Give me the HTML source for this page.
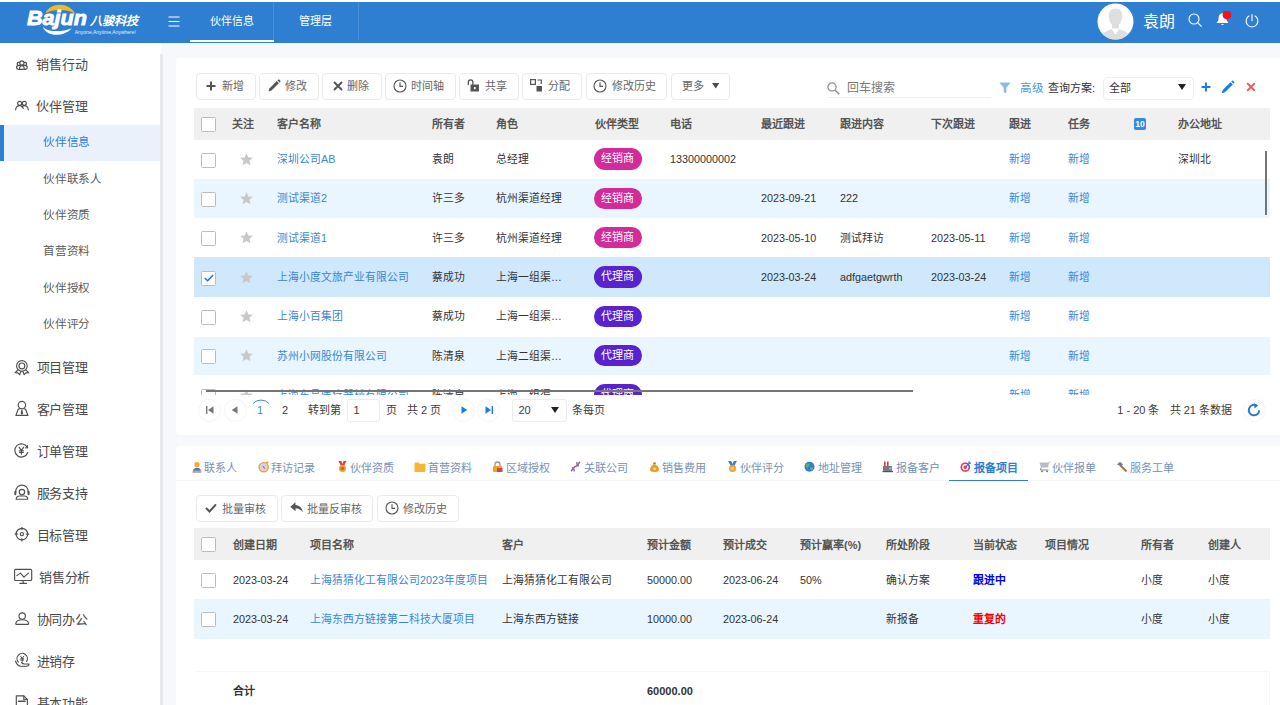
<!DOCTYPE html>
<html lang="zh-CN">
<head>
<meta charset="utf-8">
<title>伙伴信息</title>
<style>
*{box-sizing:border-box;margin:0;padding:0}
html,body{width:1280px;height:705px;overflow:hidden;background:#fff}
body{font-family:"Liberation Sans",sans-serif;color:#333;position:relative;font-size:11px}
.abs{position:absolute}
#hdr{position:absolute;left:0;top:2px;width:1280px;height:41px;background:#2e7ed1}
#hdr .t{position:absolute;top:0;height:41px;line-height:39px;color:#fff;font-size:11px;white-space:nowrap}
#side{position:absolute;left:0;top:43px;width:161px;height:662px;background:#fff}
#main{position:absolute;left:161px;top:43px;width:1119px;height:662px;background:#f6f8fc}
.m1{position:absolute;left:37px;font-size:13px;letter-spacing:-0.1px;color:#4a4a4a;height:20px;line-height:20px;white-space:nowrap}
.m2{position:absolute;left:43.4px;font-size:11.6px;letter-spacing:-0.4px;color:#5c5c5c;height:20px;line-height:20px;white-space:nowrap}
.ic{position:absolute;left:14px}
.panel{position:absolute;background:#fff;border-radius:4px 0 0 4px}
.btn{position:absolute;height:27px;border:1px solid #ebebeb;border-radius:4px;background:#fff;font-size:11px;color:#666;white-space:nowrap}
.btn span{position:absolute;top:0.8px;line-height:25px}
.btn svg{position:absolute;margin-top:-1px}
.th{position:absolute;background:#f0f0f0}
.th b{position:absolute;top:0.8px;font-size:11px;color:#555;font-weight:bold;white-space:nowrap}
.row{position:absolute;left:194px;width:1076px;overflow:hidden}
.row span,.row a{position:absolute;top:0.5px;font-size:10.8px;white-space:nowrap;color:#333}
.row a{color:#3a86d4}
.cb{position:absolute;width:15px;height:15px;border:1px solid #bcbcbc;border-radius:1.5px;background:#fff}
.row .bdg{left:399px;width:48px;height:21.4px;line-height:21.4px!important;border-radius:11px;color:#fff;font-size:11px;text-align:center}
.star{position:absolute;left:45px;width:13px;height:13px}
.tab{position:absolute;top:460.8px;font-size:11px;color:#7691b5;height:14px;line-height:14px;white-space:nowrap}
.pg{position:absolute;font-size:11px;color:#3c3c3c;white-space:nowrap;line-height:22px;top:399px;height:22px}
</style>
</head>
<body>
<div id="hdr">
<svg class="abs" style="left:20px;top:-2px" width="130" height="45" viewBox="20 0 130 45">
<path d="M45.500 13.200C49 3.500 68.500 0.500 75.200 13.900C68.500 8.600 53 9 45.500 13.200Z" fill="#f5b81f"/>
<path d="M42.600 26.400C46 31.500 60 33 72 28.200C63 37.500 46.500 37 42.600 26.400Z" fill="#fff"/>
<text x="27" y="25.400" font-family="Liberation Sans, sans-serif" font-size="21" font-weight="bold" font-style="italic" fill="#fff" stroke="#fff" stroke-width="0.9" textLength="60" lengthAdjust="spacingAndGlyphs">Bajun</text>
<text x="89.500" y="24.600" font-family="Liberation Sans, sans-serif" font-size="12" font-weight="bold" font-style="italic" fill="#fff" textLength="49" lengthAdjust="spacingAndGlyphs">八骏科技</text>
<text x="74.800" y="33.800" font-family="Liberation Sans, sans-serif" font-size="5" fill="#e8f0fb" textLength="61" lengthAdjust="spacingAndGlyphs">Anyone,Anytime,Anywhere!</text>
</svg>
<svg class="abs" style="left:168px;top:14px" width="12" height="11" viewBox="0 0 12 11"><path d="M0.5 1h11M0.5 5.5h11M0.5 10h11" stroke="#fff" stroke-width="1.15" fill="none"/></svg>
<div class="t" style="left:210px">伙伴信息</div>
<div class="abs" style="left:190px;top:38px;width:83.5px;height:2px;background:#fff"></div>
<div class="abs" style="left:273px;top:0;width:1px;height:38px;background:#4a90d9"></div>
<div class="t" style="left:299px">管理层</div>
<div class="abs" style="left:358px;top:0;width:1px;height:38px;background:#4a90d9"></div>
<svg class="abs" style="left:1097px;top:0.5px" width="37" height="37" viewBox="0 0 37 37">
<defs><clipPath id="av"><circle cx="18.5" cy="18.5" r="18"/></clipPath></defs>
<circle cx="18.5" cy="18.5" r="18" fill="#fff"/>
<g clip-path="url(#av)" fill="#dedede">
<path d="M18.500 5.500c4.200 0 6.800 3 6.800 7.500 0 3.500-1.500 6.500-3.300 8.500v4h-7v-4c-1.800-2-3.300-5-3.300-8.500 0-4.500 2.600-7.500 6.800-7.500z"/>
<path d="M3 37C4 30 9 28.500 14.500 26L18.500 31.500 22.500 26C28 28.500 33 30 34 37Z"/>
</g></svg>
<div class="t" style="left:1142.600px;font-size:16px;letter-spacing:0.3px;line-height:39.600px">袁朗</div>
<svg class="abs" style="left:1188px;top:11px" width="15" height="15" viewBox="0 0 15 15"><circle cx="6" cy="6" r="5" stroke="#fff" stroke-width="1.1" fill="none"/><path d="M9.6 9.6L13.6 13.6" stroke="#fff" stroke-width="1.1"/></svg>
<svg class="abs" style="left:1216px;top:9px" width="16" height="17" viewBox="0 0 16 17"><path d="M6.3 2.2c-2.4.3-3.7 2.2-3.7 4.5 0 3-1.1 3.9-1.8 4.7v.7h11.4v-.7c-.7-.8-1.800-1.700-1.800-4.700 0-2.300-1.300-4.200-3.700-4.500z" fill="#fff"/><path d="M5.100 13a1.500 1.500 0 0 0 2.800 0z" fill="#fff"/><circle cx="10.9" cy="3.800" r="4.400" fill="#f5101e"/></svg>
<svg class="abs" style="left:1245px;top:11.500px" width="14" height="14" viewBox="0 0 14 14"><path d="M4.300 1.800A5.900 5.900 0 1 0 9.700 1.800" stroke="#fff" stroke-width="1.100" fill="none"/><path d="M7 0.300V7" stroke="#fff" stroke-width="1.100"/></svg>
</div>
<div id="side">
<div class="abs" style="left:0;top:81.500px;width:161px;height:36px;background:#eaf1fb"></div>
<div class="abs" style="left:0;top:81.500px;width:4px;height:36px;background:#2e7ed1"></div>
<svg class="ic" style="left:12px;top:12px" width="20" height="20" viewBox="0 0 20 20"><g stroke="#4f4f4f" stroke-width="1.15" fill="none" stroke-linecap="round" stroke-linejoin="round"><circle cx="9.9" cy="7.9" r="2.1"/><path d="M7.500 7.500a1.500 1.500 0 1 0-1.500 2.700M12.300 7.500a1.500 1.500 0 1 1 1.500 2.700"/><path d="M4.500 12.600c0-1.500 1.100-2.200 2.500-2.200h5.800c1.400 0 2.500.7 2.500 2.200 0 1.100-.8 1.700-2 1.700h-6.800c-1.200 0-2-.6-2-1.700z"/><path d="M7.500 14.200c0-2.200 1-3.500 2.400-3.500s2.400 1.300 2.400 3.500"/></g></svg>
<div class="m1" style="top:12px;left:36.2px">销售行动</div>
<svg class="ic" style="left:12px;top:54px" width="20" height="20" viewBox="0 0 20 20"><g stroke="#4f4f4f" stroke-width="1.15" fill="none" stroke-linecap="round" stroke-linejoin="round"><circle cx="7.700" cy="6.300" r="2"/><circle cx="12.300" cy="6.300" r="2"/><path d="M3.600 12.800c.3-2.700 1.900-4.200 4.100-4.200 1.800 0 3 1.100 3.600 2.800M9.900 9.900c.7-.8 1.500-1.300 2.500-1.300 2.200 0 3.600 1.500 3.900 4.200"/></g></svg>
<div class="m1" style="top:54px;left:36.2px">伙伴管理</div>
<svg class="ic" style="left:12px;top:314px" width="20" height="20" viewBox="0 0 20 20"><g stroke="#4f4f4f" stroke-width="1.15" fill="none" stroke-linecap="round" stroke-linejoin="round"><circle cx="9.900" cy="8.900" r="5.300"/><circle cx="9.900" cy="8.900" r="2.900"/><path d="M6 13L3.100 15.600l2.800.3 1.700 1.800L9 14.300M13.800 13l2.900 2.600-2.800.3-1.700 1.800-1.400-3.400"/></g></svg>
<div class="m1" style="top:314.8px;left:36.6px">项目管理</div>
<svg class="ic" style="left:12px;top:356px" width="20" height="20" viewBox="0 0 20 20"><g stroke="#4f4f4f" stroke-width="1.15" fill="none" stroke-linecap="round" stroke-linejoin="round"><circle cx="9.900" cy="6.100" r="3.700"/><path d="M7.800 9.600C7 9.600 6.300 10 6 10.800L3.900 16.400H15.900L13.800 10.800C13.500 10 12.800 9.600 12 9.600"/><path d="M9.900 10.800v.8l-.6 2.600.6.900.6-.9-.6-2.600" fill="#4f4f4f"/></g></svg>
<div class="m1" style="top:356.8px;left:36.6px">客户管理</div>
<svg class="ic" style="left:12px;top:398px" width="20" height="20" viewBox="0 0 20 20"><g stroke="#4f4f4f" stroke-width="1.15" fill="none" stroke-linecap="round" stroke-linejoin="round"><path d="M15.400 6.600A6.600 6.600 0 1 0 15.700 11.500"/><path d="M13.600 6.900l2-.2-.2-2"/><path d="M7.200 6.300l2.200 3 2.200-3M9.400 9.300v3.900M7.400 9.700h4M7.400 11.300h4"/></g></svg>
<div class="m1" style="top:398.8px;left:36.6px">订单管理</div>
<svg class="ic" style="left:12px;top:440px" width="20" height="20" viewBox="0 0 20 20"><g stroke="#4f4f4f" stroke-width="1.15" fill="none" stroke-linecap="round" stroke-linejoin="round"><path d="M3.800 9.800V8.300a6.150 6.150 0 0 1 12.300 0v1.500"/><path d="M3.300 8.600v2.600M16.600 8.600v2.600" stroke-width="1.900"/><circle cx="9.950" cy="9.100" r="2.700"/><path d="M4.200 16.200c0-2.200 1.500-3.200 3.500-3.200h4.500c2 0 3.500 1 3.500 3.200z"/></g></svg>
<div class="m1" style="top:440.8px;left:36.6px">服务支持</div>
<svg class="ic" style="left:12px;top:482px" width="20" height="20" viewBox="0 0 20 20"><g stroke="#4f4f4f" stroke-width="1.15" fill="none" stroke-linecap="round" stroke-linejoin="round"><circle cx="9.900" cy="9.100" r="5.800"/><circle cx="9.900" cy="9.100" r="1.600"/><path d="M9.900 2.300v2.300M9.900 13.600v2.300M3.100 9.100h2.300M14.400 9.100h2.300"/></g></svg>
<div class="m1" style="top:482.8px;left:36.6px">目标管理</div>
<svg class="ic" style="left:12px;top:524px" width="22" height="20" viewBox="0 0 22 20"><g stroke="#4f4f4f" stroke-width="1.15" fill="none" stroke-linecap="round" stroke-linejoin="round"><rect x="2.600" y="2.300" width="17.100" height="11.200" rx="1"/><path d="M4.900 8.600l3.500-2.500 3.500 4 4.500-4M11.150 13.600v2.600M7.900 16.400h6.500"/></g></svg>
<div class="m1" style="top:524.8px;left:38.8px">销售分析</div>
<svg class="ic" style="left:12px;top:566px" width="20" height="20" viewBox="0 0 20 20"><g stroke="#4f4f4f" stroke-width="1.15" fill="none" stroke-linecap="round" stroke-linejoin="round"><circle cx="10.200" cy="7" r="3.200"/><path d="M4.300 15.300c-.5 0-.6-.4-.5-.9.500-2.400 2.500-3.700 6.400-3.700s5.900 1.300 6.400 3.700c.1.500 0 .9-.5.9z"/></g></svg>
<div class="m1" style="top:566.8px;left:36.6px">协同办公</div>
<svg class="ic" style="left:12px;top:608px" width="20" height="20" viewBox="0 0 20 20"><g stroke="#4f4f4f" stroke-width="1.15" fill="none" stroke-linecap="round" stroke-linejoin="round"><path d="M6.300 11.100A5.200 5.200 0 1 1 14.600 10.400"/><path d="M8.600 5.200l1.600 2.200 1.600-2.200M10.200 7.400v3M8.700 7.800h3M8.700 9.100h3" stroke-width="1"/><path d="M3.500 10.200c1 2.500 2.600 5 5.200 5h5.800c1.500 0 2.400-1 2.500-2.200h-4.500c-1.200 0-2.200-.6-3-1.500"/></g></svg>
<div class="m1" style="top:608.8px;left:36.6px">进销存</div>
<svg class="ic" style="left:12px;top:650px" width="20" height="20" viewBox="0 0 20 20"><g stroke="#4f4f4f" stroke-width="1.15" fill="none" stroke-linecap="round" stroke-linejoin="round"><path d="M4.300 2.900h7.500l3.600 3.600v12H4.300z"/><path d="M11.800 2.900v3.600h3.600"/><path d="M6.600 8.200h6.400" stroke-width="1.600"/></g></svg>
<div class="m1" style="top:650.8px;left:36.6px">基本功能</div>
<div class="m2" style="top:88.5px;color:#2e7ed1">伙伴信息</div>
<div class="m2" style="top:125.5px">伙伴联系人</div>
<div class="m2" style="top:161.5px">伙伴资质</div>
<div class="m2" style="top:197.5px">首营资料</div>
<div class="m2" style="top:234.5px">伙伴授权</div>
<div class="m2" style="top:270.5px">伙伴评分</div>
</div>
<div id="main"></div>
<div class="abs" style="left:160px;top:54px;width:2.700px;height:651px;background:#e7e8eb"></div>
<div class="panel" style="left:176px;top:57.500px;width:1110px;height:377.500px"></div>
<div class="panel" style="left:176px;top:445.500px;width:1110px;height:270px"></div>
<div class="btn" style="left:196px;top:72.5px;width:59.5px"><svg style="left:9px;top:8px" width="10" height="10" viewBox="0 0 10 10"><path d="M5 0.500v9M0.500 5h9" stroke="#555" stroke-width="2"/></svg><span style="left:25px">新增</span></div>
<div class="btn" style="left:259px;top:72.5px;width:59.5px"><svg style="left:8px;top:6px" width="13" height="13" viewBox="0 0 13 13"><path d="M0.500 12.500l.9-3 7.400-7.400 2.100 2.100-7.400 7.400z" fill="#555"/><path d="M9.500 1.400l.6-.6c.4-.4 1-.4 1.400 0l.7.700c.4.400.4 1 0 1.400l-.6.600z" fill="#555"/></svg><span style="left:24.7px">修改</span></div>
<div class="btn" style="left:322px;top:72.5px;width:59.5px"><svg style="left:10px;top:8px" width="10" height="10" viewBox="0 0 10 10"><path d="M1 1l8 8M9 1l-8 8" stroke="#555" stroke-width="2"/></svg><span style="left:24.3px">删除</span></div>
<div class="btn" style="left:385px;top:72.5px;width:70.5px"><svg style="left:7.200px;top:6px" width="14" height="14" viewBox="0 0 14 14"><circle cx="7" cy="7" r="6" stroke="#555" stroke-width="1.100" fill="none"/><path d="M7 3.300V7.400H10" stroke="#555" stroke-width="1.100" fill="none"/></svg><span style="left:25px">时间轴</span></div>
<div class="btn" style="left:459px;top:72.5px;width:59.5px"><svg style="left:7px;top:6px" width="13" height="13" viewBox="0 0 13 13"><path d="M1.300 6V3.200a2.300 2.300 0 0 1 4.600 0V6" stroke="#555" stroke-width="1.300" fill="none"/><rect x="3.500" y="5.500" width="8.500" height="7" fill="#555"/><rect x="7" y="8" width="1.600" height="2.200" fill="#fff"/></svg><span style="left:24.7px">共享</span></div>
<div class="btn" style="left:522px;top:72.5px;width:59.5px"><svg style="left:7.300px;top:6px" width="13" height="13" viewBox="0 0 13 13"><rect x="0.600" y="0.600" width="4.800" height="4.800" stroke="#555" stroke-width="1.200" fill="none"/><rect x="6.500" y="7" width="5.500" height="5.500" fill="#555"/><path d="M7.500 1h3.800v4" stroke="#555" stroke-width="1.200" fill="none"/></svg><span style="left:24.8px">分配</span></div>
<div class="btn" style="left:585.5px;top:72.5px;width:81px"><svg style="left:6.500px;top:6px" width="14" height="14" viewBox="0 0 14 14"><circle cx="7" cy="7" r="6" stroke="#555" stroke-width="1.100" fill="none"/><path d="M7 3.300V7.400H10" stroke="#555" stroke-width="1.100" fill="none"/></svg><span style="left:25px">修改历史</span></div>
<div class="btn" style="left:670.5px;top:72.5px;width:59.5px"><svg style="left:40px;top:10.800px" width="7.500" height="5.500" viewBox="0 0 8 6"><path d="M0 0h8L4 6z" fill="#4a4a4a"/></svg><span style="left:10.5px">更多</span></div>
<svg class="abs" style="left:827px;top:81.500px" width="13" height="13" viewBox="0 0 13 13"><circle cx="5" cy="5" r="4.100" stroke="#8a8a8a" stroke-width="1.200" fill="none"/><path d="M8 8l4.300 4.300" stroke="#8a8a8a" stroke-width="1.400"/></svg>
<div class="abs" style="left:846.500px;top:78.800px;font-size:12px;letter-spacing:0.25px;line-height:18px;color:#777;white-space:nowrap">回车搜索</div>
<div class="abs" style="left:827px;top:96.500px;width:164px;height:1px;background:#eef1f7"></div>
<svg class="abs" style="left:999px;top:82px" width="12" height="12" viewBox="0 0 12 12"><path d="M0.300 0.500h11.400L7.300 5.800V11.500L4.700 10V5.800z" fill="#8bbbe6"/></svg>
<div class="abs" style="left:1020px;top:79.600px;font-size:11.500px;letter-spacing:0.5px;line-height:17px;color:#4d97e0;white-space:nowrap">高级</div>
<div class="abs" style="left:1047.500px;top:79.600px;font-size:11px;letter-spacing:0.1px;line-height:17px;color:#333;white-space:nowrap">查询方案:</div>
<div class="abs" style="left:1103px;top:76.500px;width:90.500px;height:23px;border:1px solid #eeeeee;border-radius:4px"></div>
<div class="abs" style="left:1109px;top:80px;font-size:11px;line-height:17px;color:#333">全部</div>
<svg class="abs" style="left:1178px;top:84px" width="8" height="6" viewBox="0 0 8 6"><path d="M0 0h8L4 6z" fill="#222"/></svg>
<svg class="abs" style="left:1200.600px;top:82.200px" width="10" height="10" viewBox="0 0 10 10"><path d="M5 0.600v8.800M0.600 5h8.800" stroke="#1a7be0" stroke-width="1.900"/></svg>
<svg class="abs" style="left:1221.200px;top:80.200px" width="14" height="14" viewBox="0 0 14 14"><path d="M0.800 13.200l.9-3.100 7.900-7.900 2.200 2.200-7.900 7.900z" fill="#1a7be0"/><path d="M10.300 1.500l.6-.6c.4-.4 1-.4 1.400 0l.8.800c.4.400.4 1 0 1.400l-.6.600z" fill="#1a7be0"/></svg>
<svg class="abs" style="left:1246.300px;top:82.400px" width="10" height="10" viewBox="0 0 10 10"><path d="M1.200 1.200l7.600 7.600M8.800 1.200l-7.600 7.600" stroke="#f3504e" stroke-width="1.900"/></svg>
<div class="th" style="left:194px;top:107.500px;width:1076px;height:32px;line-height:32px"><div class="abs" style="left:0.500px;top:0;width:100%;height:32px">
<div class="cb" style="left:6.500px;top:9px"></div>
<b style="left:37.5px">关注</b>
<b style="left:82.5px">客户名称</b>
<b style="left:237.5px">所有者</b>
<b style="left:301.5px">角色</b>
<b style="left:400.5px">伙伴类型</b>
<b style="left:475.5px">电话</b>
<b style="left:566.5px">最近跟进</b>
<b style="left:645.5px">跟进内容</b>
<b style="left:736.5px">下次跟进</b>
<b style="left:814.5px">跟进</b>
<b style="left:873.5px">任务</b>
<b style="left:983.5px">办公地址</b>
<svg class="abs" style="left:939.500px;top:10.500px" width="12" height="12" viewBox="0 0 12 12"><rect width="12" height="12" rx="1.800" fill="#2f8be6"/><text x="6" y="9.200" font-size="8.500" font-weight="bold" font-family="Liberation Sans, sans-serif" fill="#fff" text-anchor="middle" textLength="9.500" lengthAdjust="spacingAndGlyphs">10</text></svg>
</div></div>
<div class="row" style="top:140.00px;height:39.00px;background:#fff;line-height:39.333px"><div class="abs" style="left:0.500px;top:-0.50px;width:100%;height:39.333px">
<div class="cb" style="left:6.500px;top:13px"></div>
<svg class="star" style="top:13px" viewBox="0 0 13 13"><path d="M6.500 0.300l1.850 4.150 4.450.4-3.350 2.950 1 4.400L6.500 9.900l-3.950 2.300 1-4.400L0.200 4.850l4.450-.4z" fill="#c8c8c8"/></svg>
<a style="left:82.5px">深圳公司AB</a>
<span style="left:237.5px">袁朗</span>
<span style="left:301.5px">总经理</span>
<span class="bdg" style="top:8.700px;background:#d42b9b">经销商</span>
<span style="left:475.5px">13300000002</span>
<a style="left:814.5px">新增</a>
<a style="left:873.5px">新增</a>
<span style="left:983.5px">深圳北</span>
</div></div>
<div class="row" style="top:179.00px;height:39.00px;background:#e9f5ff;line-height:39.333px"><div class="abs" style="left:0.500px;top:-0.17px;width:100%;height:39.333px">
<div class="cb" style="left:6.500px;top:13px"></div>
<svg class="star" style="top:13px" viewBox="0 0 13 13"><path d="M6.500 0.300l1.850 4.150 4.450.4-3.350 2.950 1 4.400L6.500 9.900l-3.950 2.300 1-4.400L0.200 4.850l4.450-.4z" fill="#c8c8c8"/></svg>
<a style="left:82.5px">测试渠道2</a>
<span style="left:237.5px">许三多</span>
<span style="left:301.5px">杭州渠道经理</span>
<span class="bdg" style="top:8.700px;background:#d42b9b">经销商</span>
<span style="left:566.5px">2023-09-21</span>
<span style="left:645.5px">222</span>
<a style="left:814.5px">新增</a>
<a style="left:873.5px">新增</a>
</div></div>
<div class="row" style="top:218.00px;height:39.00px;background:#fff;line-height:39.333px"><div class="abs" style="left:0.500px;top:0.17px;width:100%;height:39.333px">
<div class="cb" style="left:6.500px;top:13px"></div>
<svg class="star" style="top:13px" viewBox="0 0 13 13"><path d="M6.500 0.300l1.850 4.150 4.450.4-3.350 2.950 1 4.400L6.500 9.900l-3.950 2.300 1-4.400L0.200 4.850l4.450-.4z" fill="#c8c8c8"/></svg>
<a style="left:82.5px">测试渠道1</a>
<span style="left:237.5px">许三多</span>
<span style="left:301.5px">杭州渠道经理</span>
<span class="bdg" style="top:8.700px;background:#d42b9b">经销商</span>
<span style="left:566.5px">2023-05-10</span>
<span style="left:645.5px">测试拜访</span>
<span style="left:736.5px">2023-05-11</span>
<a style="left:814.5px">新增</a>
<a style="left:873.5px">新增</a>
</div></div>
<div class="row" style="top:257.00px;height:40.00px;background:#cfe8fc;line-height:39.333px"><div class="abs" style="left:0.500px;top:0.50px;width:100%;height:39.333px">
<div class="cb" style="left:6.500px;top:13px"><svg style="position:absolute;left:1.500px;top:2.500px" width="10" height="8" viewBox="0 0 10 8"><path d="M0.800 4l2.800 2.800L9.200 1" stroke="#1a73d8" stroke-width="1.500" fill="none"/></svg></div>
<svg class="star" style="top:13px" viewBox="0 0 13 13"><path d="M6.500 0.300l1.850 4.150 4.450.4-3.350 2.950 1 4.400L6.500 9.900l-3.950 2.300 1-4.400L0.200 4.850l4.450-.4z" fill="#c8c8c8"/></svg>
<a style="left:82.5px">上海小度文旅产业有限公司</a>
<span style="left:237.5px">蔡成功</span>
<span style="left:301.5px">上海一组渠…</span>
<span class="bdg" style="top:8.700px;background:#5a22cf">代理商</span>
<span style="left:566.5px">2023-03-24</span>
<span style="left:645.5px">adfgaetgwrth</span>
<span style="left:736.5px">2023-03-24</span>
<a style="left:814.5px">新增</a>
<a style="left:873.5px">新增</a>
</div></div>
<div class="row" style="top:297.00px;height:40.00px;background:#fff;line-height:39.333px"><div class="abs" style="left:0.500px;top:-0.17px;width:100%;height:39.333px">
<div class="cb" style="left:6.500px;top:13px"></div>
<svg class="star" style="top:13px" viewBox="0 0 13 13"><path d="M6.500 0.300l1.850 4.150 4.450.4-3.350 2.950 1 4.400L6.500 9.900l-3.950 2.300 1-4.400L0.200 4.850l4.450-.4z" fill="#c8c8c8"/></svg>
<a style="left:82.5px">上海小百集团</a>
<span style="left:237.5px">蔡成功</span>
<span style="left:301.5px">上海一组渠…</span>
<span class="bdg" style="top:8.700px;background:#5a22cf">代理商</span>
<a style="left:814.5px">新增</a>
<a style="left:873.5px">新增</a>
</div></div>
<div class="row" style="top:337.00px;height:38.00px;background:#e9f5ff;line-height:39.333px"><div class="abs" style="left:0.500px;top:-0.84px;width:100%;height:39.333px">
<div class="cb" style="left:6.500px;top:13px"></div>
<svg class="star" style="top:13px" viewBox="0 0 13 13"><path d="M6.500 0.300l1.850 4.150 4.450.4-3.350 2.950 1 4.400L6.500 9.900l-3.950 2.300 1-4.400L0.200 4.850l4.450-.4z" fill="#c8c8c8"/></svg>
<a style="left:82.5px">苏州小网股份有限公司</a>
<span style="left:237.5px">陈清泉</span>
<span style="left:301.5px">上海二组渠…</span>
<span class="bdg" style="top:8.700px;background:#5a22cf">代理商</span>
<a style="left:814.5px">新增</a>
<a style="left:873.5px">新增</a>
</div></div>
<div class="row" style="top:375.00px;height:19.50px;background:#fff;line-height:39.333px"><div class="abs" style="left:0.500px;top:0.50px;width:100%;height:39.333px">
<div class="cb" style="left:6.500px;top:13px"></div>
<svg class="star" style="top:13px" viewBox="0 0 13 13"><path d="M6.500 0.300l1.850 4.150 4.450.4-3.350 2.950 1 4.400L6.500 9.900l-3.950 2.300 1-4.400L0.200 4.850l4.450-.4z" fill="#c8c8c8"/></svg>
<a style="left:82.5px">上海东昌医疗器械有限公司</a>
<span style="left:237.5px">陈清泉</span>
<span style="left:301.5px">上海二组渠…</span>
<span class="bdg" style="top:8.700px;background:#5a22cf">代理商</span>
<a style="left:814.5px">新增</a>
<a style="left:873.5px">新增</a>
</div></div>
<div class="abs" style="left:1265px;top:150.500px;width:2px;height:64.500px;background:#757575"></div>
<div class="abs" style="left:205.500px;top:390.200px;width:707.500px;height:2px;background:#757575"></div>
<div class="abs" style="left:198.0px;top:398.500px;width:23px;height:23px;border:1px solid #f2f5f9;border-radius:50%"></div>
<div class="abs" style="left:223.5px;top:398.500px;width:23px;height:23px;border:1px solid #f2f5f9;border-radius:50%"></div>
<div class="abs" style="left:452.0px;top:398.500px;width:23px;height:23px;border:1px solid #f2f5f9;border-radius:50%"></div>
<div class="abs" style="left:477.0px;top:398.500px;width:23px;height:23px;border:1px solid #f2f5f9;border-radius:50%"></div>
<svg class="abs" style="left:205.500px;top:406px" width="8" height="8" viewBox="0 0 8 8"><path d="M0.700 0v8" stroke="#777" stroke-width="1.400"/><path d="M7.500 0.300v7.400L2 4z" fill="#777"/></svg>
<svg class="abs" style="left:231px;top:406px" width="7" height="8" viewBox="0 0 7 8"><path d="M6.500 0.300v7.400L0.800 4z" fill="#777"/></svg>
<svg class="abs" style="left:250px;top:398px" width="22" height="8" viewBox="0 0 22 8"><path d="M3 5.500A11 11 0 0 1 19 5.500" stroke="#3b8ad9" stroke-width="1" fill="none"/></svg>
<div class="pg" style="left:257px;color:#3b8ad9">1</div>
<div class="pg" style="left:282px">2</div>
<div class="pg" style="left:308px">转到第</div>
<div class="abs" style="left:347px;top:399px;width:32.500px;height:22.500px;border:1px solid #ececec;border-radius:3px"></div>
<div class="pg" style="left:353.500px">1</div>
<div class="pg" style="left:386px">页</div>
<div class="pg" style="left:407px">共 2 页</div>
<svg class="abs" style="left:460.500px;top:406px" width="7" height="8" viewBox="0 0 7 8"><path d="M0.500 0.300v7.400L6.200 4z" fill="#1a7be0"/></svg>
<svg class="abs" style="left:484.500px;top:406px" width="8" height="8" viewBox="0 0 8 8"><path d="M7.300 0v8" stroke="#1a7be0" stroke-width="1.400"/><path d="M0.500 0.300v7.400L6 4z" fill="#1a7be0"/></svg>
<div class="abs" style="left:512px;top:399px;width:54.500px;height:22.500px;border:1px solid #ececec;border-radius:3px"></div>
<div class="pg" style="left:518.500px">20</div>
<svg class="abs" style="left:551px;top:407px" width="8" height="6" viewBox="0 0 8 6"><path d="M0 0h8L4 6z" fill="#222"/></svg>
<div class="pg" style="left:572.300px">条每页</div>
<div class="pg" style="left:1117.300px">1 - 20 条</div>
<div class="pg" style="left:1169.700px">共 21 条数据</div>
<div class="abs" style="left:1242.800px;top:398.500px;width:23px;height:23px;border:1px solid #f3f5f8;border-radius:50%"></div>
<svg class="abs" style="left:1247.300px;top:403px" width="14" height="14" viewBox="0 0 14 14"><path d="M9.600 2.600A5.200 5.200 0 1 0 12.200 7.200" stroke="#1f7bcf" stroke-width="1.900" fill="none"/><path d="M6.800 0l4.400 2.400-3.600 3z" fill="#1f7bcf"/></svg>
<svg class="abs" style="left:191px;top:461px" width="11.500" height="11.500" viewBox="0 0 11.500 11.500"><circle cx="6" cy="3.600" r="2.700" fill="#f3a936"/><path d="M1.600 11.500c0-3.200 1.800-4.800 4.400-4.800s4.400 1.600 4.400 4.800z" fill="#3b7bd6"/><rect x="1.800" y="9.600" width="8.400" height="1.700" rx="0.800" fill="#f0a030"/></svg>
<div class="tab" style="left:204px">联系人</div>
<svg class="abs" style="left:258.2px;top:461px" width="11.500" height="11.500" viewBox="0 0 11.500 11.500"><path d="M7.500 1.500l2-1.200 1 1.500-2 1z" fill="#e09030"/><circle cx="5.700" cy="6.200" r="5.300" fill="#eea23a"/><circle cx="5.700" cy="6.200" r="3.900" fill="#d3d6e0"/><path d="M4.200 4.600l1.900 1 1.400 2.600-1.900-1z" fill="#d8557a"/></svg>
<div class="tab" style="left:271px">拜访记录</div>
<svg class="abs" style="left:337px;top:461px" width="11.500" height="11.500" viewBox="0 0 11.500 11.500"><path d="M1.500 0h3l1 3 1-3h3L7 5H4z" fill="#d9453a"/><circle cx="5.500" cy="7.500" r="3.500" fill="#f0a030"/><circle cx="5.500" cy="7.500" r="1.800" fill="#c86a18"/></svg>
<div class="tab" style="left:350px">伙伴资质</div>
<svg class="abs" style="left:414px;top:461px" width="11.500" height="11.500" viewBox="0 0 11.500 11.500"><path d="M0.500 2.500c0-.6.400-1 1-1h3l1.200 1.300h4.800c.6 0 1 .4 1 1V10c0 .6-.4 1-1 1h-9c-.6 0-1-.4-1-1z" fill="#f7b531"/></svg>
<div class="tab" style="left:428px">首营资料</div>
<svg class="abs" style="left:492px;top:461px" width="11.500" height="11.500" viewBox="0 0 11.500 11.500"><path d="M3 5V3.500a2.500 2.500 0 0 1 5 0V5" stroke="#999" stroke-width="1.300" fill="none"/><rect x="1" y="5" width="9" height="6" rx="1" fill="#f0a030"/><rect x="5" y="7" width="5.500" height="4" fill="#d9453a"/></svg>
<div class="tab" style="left:506px">区域授权</div>
<svg class="abs" style="left:570px;top:461px" width="11.500" height="11.500" viewBox="0 0 11.500 11.500"><path d="M1 10C3 9 3 6 5.500 5.500S8 2 10 1" stroke="#d9456a" stroke-width="1.600" fill="none"/><path d="M2 6.500C4 7 4.500 9 4 10.500M7 1c-.5 1.500 0 3.500 2 4" stroke="#4a8ae0" stroke-width="1.400" fill="none"/></svg>
<div class="tab" style="left:584px">关联公司</div>
<svg class="abs" style="left:649px;top:461px" width="11.500" height="11.500" viewBox="0 0 11.500 11.500"><path d="M4 1.500h3l-.5 2h-2z" fill="#c8771c"/><path d="M4.500 3.500h2C9 5 10 7 10 8.800 10 10.500 8.500 11 5.500 11S1 10.500 1 8.800C1 7 2 5 4.500 3.500z" fill="#e59a2c"/><circle cx="5.500" cy="7.800" r="1.500" fill="#f6d67a"/></svg>
<div class="tab" style="left:662px">销售费用</div>
<svg class="abs" style="left:727px;top:461px" width="11.500" height="11.500" viewBox="0 0 11.500 11.500"><path d="M1 0h3.200l1.300 3 1.300-3H10L7.200 5H3.800z" fill="#3f7fd8"/><circle cx="5.500" cy="7.500" r="3.500" fill="#f0a030"/><circle cx="5.500" cy="7.500" r="1.800" fill="#f6c85a"/></svg>
<div class="tab" style="left:740px">伙伴评分</div>
<svg class="abs" style="left:804px;top:461px" width="11.500" height="11.500" viewBox="0 0 11.500 11.500"><circle cx="5.500" cy="5.800" r="5" fill="#2f7de0"/><path d="M2 3.500c1.500-1.500 3-1.500 3.500 0S4 5.500 3.500 7 2 6 2 3.500zM6.500 6.500c1-.5 2.500 0 2.500 1.300S7.500 10 6.800 9s-1-2-.3-2.500z" fill="#5cb85c"/></svg>
<div class="tab" style="left:818px">地址管理</div>
<svg class="abs" style="left:882px;top:461px" width="11.500" height="11.500" viewBox="0 0 11.500 11.500"><rect x="1" y="5" width="9" height="5" fill="#7a7a86"/><rect x="2" y="0.500" width="1.600" height="5" fill="#c44"/><rect x="5" y="0.500" width="1.600" height="5" fill="#c44"/><rect x="0.500" y="10" width="10.500" height="1.200" fill="#555"/><rect x="7" y="6.500" width="2.500" height="2" fill="#8ab8e8"/></svg>
<div class="tab" style="left:896px">报备客户</div>
<svg class="abs" style="left:960px;top:461px" width="11.500" height="11.500" viewBox="0 0 11.500 11.500"><circle cx="5.300" cy="6.200" r="4.800" fill="#e0355a"/><circle cx="5.300" cy="6.200" r="3.100" fill="#fff"/><circle cx="5.300" cy="6.200" r="1.700" fill="#e0355a"/><path d="M5.300 6.200L10 1.500" stroke="#4a7ad0" stroke-width="1.300"/><path d="M8.500 0.500l2.200 2.200" stroke="#4a7ad0" stroke-width="1.300"/></svg>
<div class="tab" style="left:974px;color:#2e7ed1;font-weight:bold">报备项目</div>
<svg class="abs" style="left:1039px;top:461px" width="11.500" height="11.500" viewBox="0 0 11.500 11.500"><path d="M0.500 1.500h9.500l-1 5H2z" fill="#b9bcc6"/><path d="M2 6.500l-.5 2.500h8" stroke="#8a8d99" stroke-width="1" fill="none"/><circle cx="3" cy="10.300" r="0.900" fill="#666"/><circle cx="8" cy="10.300" r="0.900" fill="#666"/><path d="M10 1.500l1-1" stroke="#8a8d99" stroke-width="1"/></svg>
<div class="tab" style="left:1052px">伙伴报单</div>
<svg class="abs" style="left:1116px;top:461px" width="11.500" height="11.500" viewBox="0 0 11.500 11.500"><path d="M4.500 4.500L10.500 10.500" stroke="#a06a3c" stroke-width="1.800"/><path d="M1 3.500L4 0.800l3 2.800-1.800 1.800z" fill="#777b88"/></svg>
<div class="tab" style="left:1130px">服务工单</div>
<div class="abs" style="left:176px;top:480px;width:1104px;height:1px;background:#f3f5f9"></div>
<div class="abs" style="left:948.500px;top:479.500px;width:79.500px;height:1.500px;background:#2e7ed1"></div>
<div class="btn" style="left:196px;top:495px;width:82px"><svg style="left:8px;top:8px" width="12" height="10" viewBox="0 0 12 10"><path d="M1 5l3.500 3.500L11 1.300" stroke="#555" stroke-width="2" fill="none"/></svg><span style="left:25px">批量审核</span></div>
<div class="btn" style="left:281px;top:495px;width:92px"><svg style="left:7.500px;top:7px" width="13" height="11" viewBox="0 0 13 11"><path d="M5.500 0.300L0.300 4.800l5.200 4.500V6.500c3.500 0 5.500 1 7.200 4C12.500 6.500 10 3.300 5.500 3z" fill="#555"/></svg><span style="left:25.2px">批量反审核</span></div>
<div class="btn" style="left:377px;top:495px;width:81.5px"><svg style="left:7.300px;top:6px" width="14" height="14" viewBox="0 0 14 14"><circle cx="7" cy="7" r="6" stroke="#555" stroke-width="1.100" fill="none"/><path d="M7 3.300V7.400H10" stroke="#555" stroke-width="1.100" fill="none"/></svg><span style="left:24.5px">修改历史</span></div>
<div class="th" style="left:194px;top:528px;width:1076px;height:32px;line-height:32px"><div class="abs" style="left:0.500px;top:0;width:100%;height:32px">
<div class="cb" style="left:6.500px;top:9px"></div>
<b style="left:38.5px">创建日期</b>
<b style="left:115.5px">项目名称</b>
<b style="left:307.5px">客户</b>
<b style="left:452.5px">预计金额</b>
<b style="left:528.5px">预计成交</b>
<b style="left:605.5px">预计赢率(%)</b>
<b style="left:691.5px">所处阶段</b>
<b style="left:778.5px">当前状态</b>
<b style="left:850.5px">项目情况</b>
<b style="left:946.5px">所有者</b>
<b style="left:1013.5px">创建人</b>
</div></div>
<div class="row" style="top:560.00px;height:39.333px;background:#fff;line-height:39.333px"><div class="abs" style="left:0.500px;top:0;width:100%;height:39.333px">
<div class="cb" style="left:6.500px;top:12.500px"></div>
<span style="left:38.5px">2023-03-24</span>
<a style="left:115.5px">上海猜猜化工有限公司2023年度项目</a>
<span style="left:307.5px">上海猜猜化工有限公司</span>
<span style="left:452.5px">50000.00</span>
<span style="left:528.5px">2023-06-24</span>
<span style="left:605.5px">50%</span>
<span style="left:691.5px">确认方案</span>
<span style="left:778.5px;color:#0000ff;font-weight:bold">跟进中</span>
<span style="left:946.5px">小度</span>
<span style="left:1013.5px">小度</span>
</div></div>
<div class="row" style="top:599.33px;height:39.333px;background:#e9f5ff;line-height:39.333px"><div class="abs" style="left:0.500px;top:0;width:100%;height:39.333px">
<div class="cb" style="left:6.500px;top:12.500px"></div>
<span style="left:38.5px">2023-03-24</span>
<a style="left:115.5px">上海东西方链接第二科技大厦项目</a>
<span style="left:307.5px">上海东西方链接</span>
<span style="left:452.5px">10000.00</span>
<span style="left:528.5px">2023-06-24</span>
<span style="left:691.5px">新报备</span>
<span style="left:778.5px;color:#ff0000;font-weight:bold">重复的</span>
<span style="left:946.5px">小度</span>
<span style="left:1013.5px">小度</span>
</div></div>
<div class="abs" style="left:194.500px;top:670.500px;width:1075.500px;height:1px;background:#f7f7f7"></div>
<div class="abs" style="left:1269px;top:671px;width:1px;height:40px;background:#f6f6f6"></div>
<div class="abs" style="left:233px;top:683px;font-size:11px;line-height:16px;font-weight:bold;color:#333">合计</div>
<div class="abs" style="left:647px;top:683px;font-size:11px;line-height:16px;font-weight:bold;color:#333">60000.00</div>
</body>
</html>
